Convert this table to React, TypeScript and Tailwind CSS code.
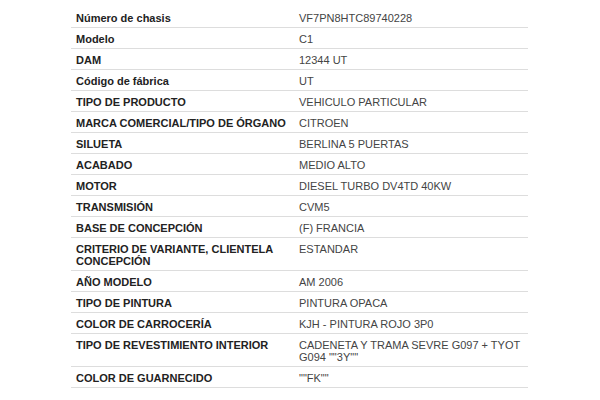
const ROWS: [string, string][] = [
  ['Número de chasis', 'VF7PN8HTC89740228'],
  ['Modelo', 'C1'],
  ['DAM', '12344 UT'],
  ['Código de fábrica', 'UT'],
  ['TIPO DE PRODUCTO', 'VEHICULO PARTICULAR'],
  ['MARCA COMERCIAL/TIPO DE ÓRGANO', 'CITROEN'],
  ['SILUETA', 'BERLINA 5 PUERTAS'],
  ['ACABADO', 'MEDIO ALTO'],
  ['MOTOR', 'DIESEL TURBO DV4TD 40KW'],
  ['TRANSMISIÓN', 'CVM5'],
  ['BASE DE CONCEPCIÓN', '(F) FRANCIA'],
  ['CRITERIO DE VARIANTE, CLIENTELA CONCEPCIÓN', 'ESTANDAR'],
  ['AÑO MODELO', 'AM 2006'],
  ['TIPO DE PINTURA', 'PINTURA OPACA'],
  ['COLOR DE CARROCERÍA', 'KJH - PINTURA ROJO 3P0'],
  ['TIPO DE REVESTIMIENTO INTERIOR', 'CADENETA Y TRAMA SEVRE G097 + TYOT G094 ""3Y""'],
  ['COLOR DE GUARNECIDO', '""FK""'],
]

export default function App() {
  return (
    <div className="w-[600px] h-[400px] bg-white pt-[7px] font-['Liberation_Sans',Arial,sans-serif] text-[11px] leading-[12px]">
      <div className="ml-[71px] w-[457px]">
        {ROWS.map(([label, value]) => (
          <div key={label} className="grid grid-cols-[223px_1fr] border-b border-[#dddddd]">
            <div className="px-[5px] pt-[5px] pb-[3px] font-bold text-[#222222]">{label}</div>
            <div className="px-[5px] pt-[5px] pb-[3px] text-[#444444]">{value}</div>
          </div>
        ))}
      </div>
    </div>
  )
}
